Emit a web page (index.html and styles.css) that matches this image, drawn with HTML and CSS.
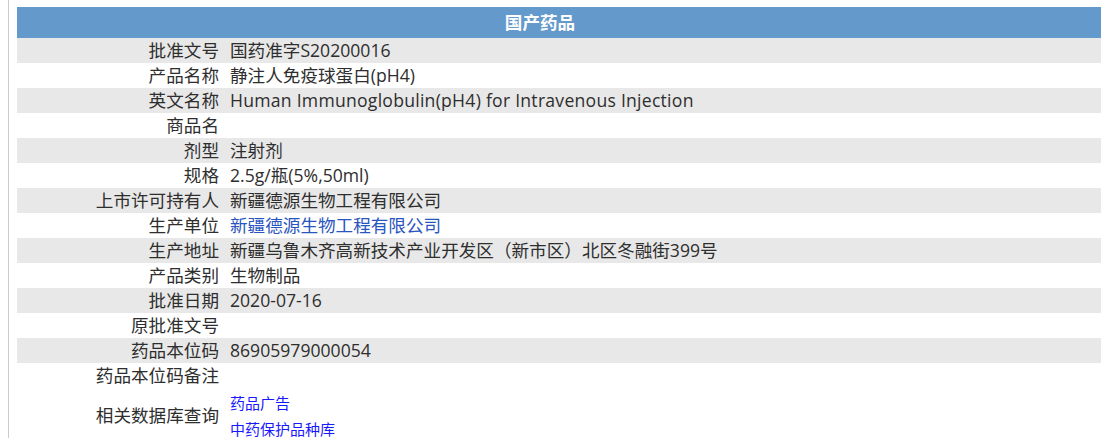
FILE: index.html
```html
<!DOCTYPE html>
<html lang="zh-CN">
<head>
<meta charset="utf-8">
<title>国产药品</title>
<link rel="stylesheet" href="styles.css">
</head>
<body>
<div class="page">
  <table class="drug">
    <thead>
      <tr><th class="head" colspan="2">国产药品</th></tr>
    </thead>
    <tbody>
      <tr class="alt"><td class="k">批准文号</td><td class="v">国药准字S20200016</td></tr>
      <tr><td class="k">产品名称</td><td class="v">静注人免疫球蛋白(pH4)</td></tr>
      <tr class="alt"><td class="k">英文名称</td><td class="v"><span class="en">Human Immunoglobulin(pH4) for Intravenous Injection</span></td></tr>
      <tr><td class="k">商品名</td><td class="v"></td></tr>
      <tr class="alt"><td class="k">剂型</td><td class="v">注射剂</td></tr>
      <tr><td class="k">规格</td><td class="v">2.5g/瓶(5%,50ml)</td></tr>
      <tr class="alt"><td class="k">上市许可持有人</td><td class="v">新疆德源生物工程有限公司</td></tr>
      <tr><td class="k">生产单位</td><td class="v"><a class="maker" href="#">新疆德源生物工程有限公司</a></td></tr>
      <tr class="alt"><td class="k">生产地址</td><td class="v">新疆乌鲁木齐高新技术产业开发区（新市区）北区冬融街399号</td></tr>
      <tr><td class="k">产品类别</td><td class="v">生物制品</td></tr>
      <tr class="alt"><td class="k">批准日期</td><td class="v">2020-07-16</td></tr>
      <tr><td class="k">原批准文号</td><td class="v"></td></tr>
      <tr class="alt"><td class="k">药品本位码</td><td class="v">86905979000054</td></tr>
      <tr><td class="k">药品本位码备注</td><td class="v"></td></tr>
      <tr><td class="k">相关数据库查询</td><td class="v links"><a class="db" href="#">药品广告</a><a class="db" href="#">中药保护品种库</a></td></tr>
    </tbody>
  </table>
</div>
</body>
</html>
```
FILE: styles.css
```css
html, body {
  margin: 0;
  padding: 0;
  background: #ffffff;
}
body {
  font-family: "Open Sans", "Noto Sans CJK SC", sans-serif;
  color: #2e2e2e;
  overflow: hidden;
}
.page {
  margin-left: 8px;
  border-left: 1px solid #cccccc;
  padding: 7px 0 0 8px;
  min-height: 100vh;
  box-sizing: border-box;
}
.drug {
  width: 100%;
  border-collapse: collapse;
  border-spacing: 0;
  font-size: 17.6px;
}
.head {
  background: #6499cc;
  color: #ffffff;
  font-weight: bold;
  font-size: 17.6px;
  height: 31px;
  padding: 0 38px 0 0;
  text-align: center;
  line-height: 31px;
}
.drug td {
  height: 25px;
  line-height: 25px;
  padding: 0;
  white-space: nowrap;
}
.alt td {
  background: #e8e8e8;
}
.k {
  width: 202px;
  text-align: right;
  padding-right: 4px !important;
}
.v {
  padding-left: 7px !important;
}
.en {
  letter-spacing: 0.25px;
}
.maker {
  color: #2a55c0;
  text-decoration: none;
}
.links {
  padding-top: 2px !important;
}
.db {
  display: block;
  font-size: 15px;
  line-height: 26px;
  color: #1818ff;
  text-decoration: none;
}
```
